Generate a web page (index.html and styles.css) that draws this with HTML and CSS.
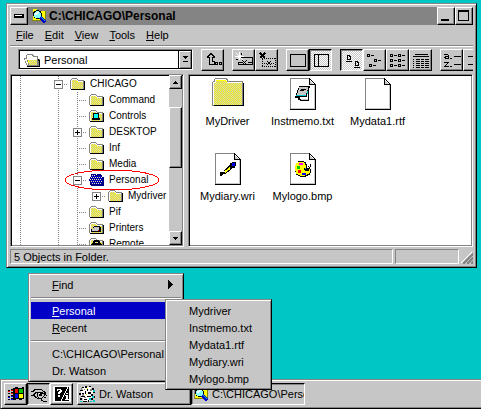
FILE: index.html
```html
<!DOCTYPE html>
<html lang="en">
<head>
<meta charset="utf-8">
<title>C:\CHICAGO\Personal</title>
<link rel="stylesheet" href="styles.css">
</head>
<body>
<svg class="defs" width="0" height="0" aria-hidden="true">
  <defs>
    <path id="checker" shape-rendering="auto" fill="none" stroke="#c6c6c6" stroke-dasharray="1 1" d="M0 .5h32M1 1.5h32M0 2.500h32M1 3.500h32M0 4.500h32M1 5.500h32M0 6.500h32M1 7.500h32M0 8.500h32M1 9.500h32M0 10.500h32M1 11.500h32M0 12.500h32M1 13.500h32M0 14.500h32M1 15.500h32M0 16.500h32M1 17.500h32M0 18.500h32M1 19.500h32M0 20.500h32M1 21.500h32"/>
    <symbol id="folder" viewBox="0 0 16 14">
      <path fill="#848484" d="M2 1h5v1h1v1h6v9h-14v-9h1v-1h1z"/>
      <path fill="#fff" d="M2 2h5v1h1v1h5v8h-12v-9h1z"/>
      <path fill="#ff0" d="M2 3h5v1h1v1h5v7h-11z"/>
      <svg x="2" y="3" width="5" height="2"><use href="#checker"/></svg>
      <svg x="2" y="5" width="11" height="7"><use href="#checker"/></svg>
      <path d="M14 4h1v9h-14v-1h13z"/>
    </symbol>
    <symbol id="magnifier" viewBox="0 0 16 16">
      <path fill="#848484" d="M1 0h6v2h8v11h-14z"/><path fill="#ff0" d="M2 1h4v2h8v9h-12z"/>
      <path fill="#848400" d="M1 12h13v1h-13zM14 3h1v10h-1z"/>
      <circle cx="6.500" cy="6.500" r="4" fill="#84ffff" stroke="#000"/>
      <path fill="#fff" d="M4 5h2v-1h2v1h-1v1h-1v1h-2z"/>
      <path d="M9.500 9.500l5 5" stroke="#0000c6" stroke-width="3"/><path d="M10 9l4 4" stroke="#00c6c6"/>
    </symbol>
    <symbol id="page" viewBox="0 0 32 32">
      <path fill="#848484" d="M3 0h20v1h-19v30h-1z"/><path fill="#fff" d="M4 1h18v6h6v24h-24z"/>
      <path d="M3 31h26v1h-26zM28 6h1v26h-1zM22 0h1v6h6v1h-7zM23 1h1v1h1v1h1v1h1v1h1v1h-1v-1h-1v-1h-1v-1h-1v-1h-1z"/>
      <path fill="#c6c6c6" d="M27 7h1v24h-24v-1h23zM23 3h1v1h1v1h1v1h-3z"/>
    </symbol>
  </defs>
</svg>

<main class="window">
  <header class="titlebar">
    <button class="bevel caption" aria-label="Control menu"><svg width="10" height="4"><path d="M0 0h10v4h-10z"/><path fill="#fff" d="M1 1h7v1h-7z"/></svg></button>
    <svg class="title-icon" width="16" height="16"><use href="#magnifier"/></svg>
    <h1>C:\CHICAGO\Personal</h1>
    <button class="bevel caption" aria-label="Minimize"><svg width="12" height="12"><path d="M1 9h8v2h-8z"/></svg></button>
    <button class="bevel caption" aria-label="Maximize"><svg width="12" height="12"><path fill-rule="evenodd" d="M0 0h11v11h-11zM1 2v8h9v-8z"/></svg></button>
  </header>

  <nav class="menubar">
    <a href="#"><u>F</u>ile</a><a href="#"><u>E</u>dit</a><a href="#"><u>V</u>iew</a><a href="#"><u>T</u>ools</a><a href="#"><u>H</u>elp</a>
  </nav>

  <div class="toolbar">
    <div class="combo">
      <svg width="18" height="14"><path fill="#848484" d="M2 2h1v-1h6v1h1v1h4v3h2v7h-13v-1h-1v-2h-1v-3h-1v-2h2z"/><path fill="#fff" d="M3 2h5v1h1v1h4v2h-10z"/><path fill="#ff0" d="M4 7h9v5h-8v-2h-1z"/><svg x="5" y="7" width="8" height="5"><use href="#checker"/></svg><path fill="#fff" d="M1 6h12v1h-10v2h1v3h-1v-2h-1v-2h-1z"/><path d="M14 6h1v1h1v7h-13v-1h12v-5h-1z"/></svg>
      <select aria-label="Folder"><option>Personal</option></select>
      <span class="drop"><svg width="7" height="7"><path d="M1 0h5v1h-1v1h-1v1h-1v-1h-1v-1h-1zM1 5h5v1h-5z"/></svg></span>
    </div>
    <div class="group">
      <button class="bevel tool" aria-label="Up one level"><svg width="20" height="18"><path fill="none" stroke="#000" d="M6.500 7v6.500h5v-3h-2v-4h2v-1h-1v-1h-1v-1h-1v-1h-1v1h-1v1h-1v1h-1v1h2"/><path fill-rule="evenodd" d="M12 11h3v3h-3zM13 12v1h1v-1zM16 11h3v3h-3zM17 12v1h1v-1z"/></svg></button>
    </div>
    <div class="group">
      <button class="bevel tool" aria-label="Connect drive"><svg width="20" height="18"><path fill="none" stroke="#000" d="M6.500 6.500h12v7h-14v-3M4 11.500h5M14 11.500h4M8 9l5 5M13 9l-5 5"/><path stroke="#fff" fill="none" d="M5.500 1v8M1 5.500h9M2 2l7 7M9 2l-7 7"/><path d="M7 2h1v2h-1zM2 8h2v1h-2zM9 6h2v1h-2z"/></svg></button>
      <button class="bevel tool" aria-label="Disconnect drive"><svg width="20" height="18"><path stroke="#000" stroke-width="2" d="M3 2l5 5M8 2l-5 5"/><path fill="none" stroke="#000" stroke-dasharray="1 1" d="M5 7.500h14M5 15.500h14M5.500 8v8M18.500 7v9M7 12.500h4M14 12.500h4"/><path stroke="#000" d="M10 10l4 4M14 10l-4 4"/></svg></button>
    </div>
    <div class="group">
      <button class="bevel tool" aria-label="Single pane"><svg width="20" height="18"><path fill="none" stroke="#000" d="M2.500 3.500h15v12h-15z"/></svg></button>
      <button class="bevel tool pressed" aria-label="Tree and contents"><svg width="20" height="18"><path fill="none" stroke="#000" d="M3.500 3.500h14v12h-14zM7.500 3v12"/></svg></button>
    </div>
    <div class="group">
      <button class="bevel tool pressed" aria-label="Large icons"><svg width="20" height="18"><path fill-rule="evenodd" d="M5 4h3v1h1v4h-4zM6 5v3h2v-2h-1v-1zM4 10h6v1h-6zM13 10h3v1h1v4h-4zM14 11v3h2v-2h-1v-1zM12 16h6v1h-6z"/></svg></button>
      <button class="bevel tool" aria-label="Small icons"><svg width="20" height="18"><path fill-rule="evenodd" d="M2 3h3v3h-3zM3 4v1h1v-1zM6 4h3v1h-3zM9 8h3v3h-3zM10 9v1h1v-1zM13 9h3v1h-3zM4 13h3v3h-3zM5 14v1h1v-1zM8 14h3v1h-3z"/></svg></button>
      <button class="bevel tool" aria-label="List"><svg width="20" height="18"><path fill-rule="evenodd" d="M2 3h3v3h-3zM3 4v1h1v-1zM6 4h3v1h-3zM2 8h3v3h-3zM3 9v1h1v-1zM6 9h3v1h-3zM2 13h3v3h-3zM3 14v1h1v-1zM6 14h3v1h-3zM10 3h3v3h-3zM11 4v1h1v-1zM14 4h3v1h-3zM10 8h3v3h-3zM11 9v1h1v-1zM14 9h3v1h-3zM10 13h3v3h-3zM11 14v1h1v-1zM14 14h3v1h-3z"/></svg></button>
      <button class="bevel tool" aria-label="Details"><svg width="20" height="18"><path d="M4 3h13v1h-13zM2 5h16v1h-16z"/><path fill="none" stroke="#000" d="M2 8.500h1M5 8.500h4M10 8.500h3M14 8.500h4M2 10.500h1M5 10.500h4M10 10.500h3M14 10.500h4M2 12.500h1M5 12.500h4M10 12.500h3M14 12.500h4M2 14.500h1M5 14.500h4M10 14.500h3M14 14.500h4M2 16.500h1M5 16.500h4M10 16.500h3M14 16.500h4"/></svg></button>
    </div>
    <div class="group">
      <button class="bevel tool" aria-label="Sort by name"><svg width="20" height="18"><path d="M2 3h4v1h1v4h-4v-1h-1v-1h1v-1h3v-1h-4zM8 7h2v1h-2zM12 5h7v1h-7zM2 11h5v1h-1v1h-1v1h-1v1h3v1h-5v-1h1v-1h1v-1h1v-1h-3zM8 15h2v1h-2zM12 13h7v1h-7z"/><path fill="#c6c6c6" d="M4 6h2v1h-2z"/></svg></button>
      <button class="bevel tool" aria-label="Sort by size"><svg width="20" height="18"><path d="M3 5h7v1h-7zM3 13h7v1h-7z"/></svg></button>
    </div>
  </div>

  <div class="panes">
    <section class="pane tree-pane">
      <ul class="tree">
        <li><i class="v"></i><i></i><i class="v h"></i><button class="exp" aria-label="Collapse"></button><svg width="16" height="14"><use href="#folder"/></svg>CHICAGO</li>
        <li><i class="v"></i><i></i><i class="v"></i><i class="v h"></i><svg width="16" height="14"><use href="#folder"/></svg>Command</li>
        <li><i class="v"></i><i></i><i class="v"></i><i class="v h"></i><svg width="16" height="14"><use href="#folder"/><path d="M4 4h6v5h1v2h-8v-2h1z"/><path fill="#0ff" d="M5 5h4v4h-4z"/></svg>Controls</li>
        <li><i class="v"></i><i></i><i class="v"></i><i class="v h"></i><button class="exp plus" aria-label="Expand"></button><svg width="16" height="14"><use href="#folder"/></svg>DESKTOP</li>
        <li><i class="v"></i><i></i><i class="v"></i><i class="v h"></i><svg width="16" height="14"><use href="#folder"/></svg>Inf</li>
        <li><i class="v"></i><i></i><i class="v"></i><i class="v h"></i><svg width="16" height="14"><use href="#folder"/></svg>Media</li>
        <li class="circled"><i class="v"></i><i></i><i class="v"></i><i class="v h"></i><button class="exp" aria-label="Collapse"></button><svg width="16" height="14"><path fill="#000084" d="M2 1h5v1h1v-1h4v1h1v2h2v9h-13v-1h-1v-4h-1v-2h1v-2h1z"/><path fill="none" stroke="#e7e7c6" stroke-dasharray="1 1" d="M3 2.500h4M2 4.500h11M1 6.500h12M2 8.500h11M3 10.500h10"/><path fill="none" stroke="#0000ff" stroke-dasharray="1 1" d="M3 3.500h9M3 5.500h10M2 7.500h11M3 9.500h10"/></svg>Personal
          <svg class="ring" viewBox="0 0 96 22"><ellipse cx="48" cy="11" rx="47" ry="10" fill="none" stroke="red"/></svg></li>
        <li><i class="v"></i><i></i><i class="v"></i><i class="v"></i><i class="h"></i><button class="exp plus" aria-label="Expand"></button><svg width="16" height="14"><use href="#folder"/></svg>Mydriver</li>
        <li><i class="v"></i><i></i><i class="v"></i><i class="v h"></i><svg width="16" height="14"><use href="#folder"/></svg>Pif</li>
        <li><i class="v"></i><i></i><i class="v"></i><i class="v h"></i><svg width="16" height="14"><use href="#folder"/><path d="M5 5h6v1h1v5h-10v-3h2v-2h1z"/><path fill="#c6c6c6" d="M5 6h5v2h-6v-1h1zM3 8h7v2h-7z"/><path fill="red" d="M9 9h1v1h-1z"/></svg>Printers</li>
        <li><i class="v"></i><i></i><i class="v"></i><i class="v h"></i><svg width="16" height="14"><use href="#folder"/><path fill="none" stroke="#000" stroke-width="2" d="M3 8l3-4h3l3 4M4 11v-2l2-2h3l2 2v2"/></svg>Remote</li>
      </ul>
      <div class="scrollbar">
        <button class="bevel arrow" aria-label="Scroll up"><svg width="5" height="3"><path d="M2 0h1v1h1v1h1v1h-5v-1h1v-1h1z"/></svg></button>
        <div class="bevel thumb"></div>
        <button class="bevel arrow" aria-label="Scroll down"><svg width="5" height="3"><path d="M0 0h5v1h-1v1h-1v1h-1v-1h-1v-1h-1z"/></svg></button>
      </div>
    </section>

    <section class="pane files">
      <figure><svg width="32" height="32"><path fill="#848484" d="M1 3h1v-2h1v-1h12v1h1v2h15v25h-31v-24h1z"/><path fill="#fff" d="M3 1h11v1h1v2h15v23h-29v-23h2z"/><path fill="#ff0" d="M4 2h10v1h1v2h15v22h-28v-22h2z"/><svg x="4" y="3" width="10" height="2"><use href="#checker"/></svg><svg x="2" y="5" width="28" height="22"><use href="#checker"/></svg><path d="M31 5h1v23h-30v-1h29z"/></svg><figcaption>MyDriver</figcaption></figure>
      <figure><svg width="32" height="32"><use href="#page"/><path d="M12 8h11v2h-1v13h-9v-1h-2v-2h-3v-2h1v-3h1v-3h1v-2h1z"/><path fill="#c6c6c6" d="M12 9h9v3h-1v3h-1v2h-9v-2h1v-3h1z"/><path fill="#fff" d="M20 16h1v5h-8v-2h7z"/><path fill="#c6c6c6" d="M14 21h7v1h-7z"/><path fill="#00c6c6" d="M9 17h10v1h-10zM20 13h1v3h-1z"/><path d="M14 11h5v1h-5zM13 12h4v1h-4z"/></svg><figcaption>Instmemo.txt</figcaption></figure>
      <figure><svg width="32" height="32"><use href="#page"/></svg><figcaption>Mydata1.rtf</figcaption></figure>
      <figure><svg width="32" height="32"><use href="#page"/><path d="M8 19h5v-1h2v2h-1v1h-3v1h-1v1h-2z"/><path stroke="#000" stroke-width="4" d="M13 19l7-6"/><path stroke="#ff0" stroke-width="2" d="M13 19l5-4"/><path d="M18 10h2v-1h4v4h-1v2h-3v-1h-1v-1h-1z"/><path fill="#00f" d="M20 10h3v3h-3z"/></svg><figcaption>Mydiary.wri</figcaption></figure>
      <figure><svg width="32" height="32"><use href="#page"/><path d="M11 8h6v1h2v2h1v4h3v1h1v4h-1v2h-2v1h-2v1h-6v-1h-2v-1h-2v-3h-1v-7h1v-2h2z"/><path fill="#ff0" d="M11 9h6v1h1v2h1v4h4v4h-1v1h-2v1h-2v1h-5v-1h-2v-1h-2v-3h-1v-6h1v-2h1z"/><path fill="#f0f" d="M12 10h4v2h-4z"/><path fill="#00c600" d="M10 13h3v3h-3z"/><path fill="red" d="M11 17h3v3h-3z"/><path fill="#00f" d="M15 20h4v2h-4z"/><path d="M17 15h5v3h-4v-1h-1zM21 13h1v1h-1zM22 14h1v-3h1v3h-1v1h-1z"/><path fill="#00c6c6" d="M18 15h1v1h-1z"/></svg><figcaption>Mylogo.bmp</figcaption></figure>
    </section>
  </div>

  <footer class="status">
    <span class="field wide">5 Objects in Folder.</span>
    <span class="field"></span>
    <svg width="12" height="12"><path stroke="#fff" d="M0 11l11-11M4 11l8-8M8 11l4-4"/><path stroke="#848484" stroke-width="2" d="M2 12l10-10M6 12l6-6M10 12l2-2"/></svg>
  </footer>
</main>

<footer class="taskbar">
  <button class="bevel task-icon" aria-label="Start"><svg width="18" height="16"><path d="M7 2h1v-1h3v1h4v-1h2v12h-2v1h-3v-1h-3v1h-3v-12zM4 3h2v2h-2zM4 6h2v2h-2zM4 9h2v2h-2zM4 12h2v2h-2zM1 4h2v1h-2zM1 7h2v1h-2zM1 10h2v1h-2zM1 13h2v1h-2z"/><path fill="red" d="M8 3h3v4h-3zM4 4h2v1h-2zM4 7h2v1h-2zM1 5h2v1h-2z"/><path fill="#00c600" d="M12 3h4v4h-4z"/><path fill="#00f" d="M8 8h3v4h-3zM4 10h2v1h-2zM4 13h2v1h-2zM1 11h2v1h-2z"/><path fill="#ff0" d="M12 8h4v4h-4z"/></svg></button>
  <button class="bevel task-icon pressed" aria-label="Find"><svg width="18" height="16"><path fill="none" stroke="#000" d="M1 5.500h2l2-2h6l3 2 2 2M1 9.500h2l3-3h5l3 1 3 2M3 9l4 3h3M7 7v3l2 2h3l2-2v-2M11 12v2l2 1h4M14 11l2 1"/><path d="M9 7h3v3h-3z"/><path fill="#fff" d="M9 7h1v1h-1z"/></svg></button>
  <button class="bevel task-icon" aria-label="Help"><svg width="18" height="16"><path fill="#fff" d="M0 0h18v16h-18z"/><path d="M2 1h14v14h-14z"/><path fill="#fff" d="M14 1h1v2h-1v2h-1v2h-1v2h-1v2h-1v2h-1v2h-1v-2h1v-2h1v-2h1v-2h1v-2h1v-2h1zM4 3h4v1h1v2h-1v1h-1v1h-2v-2h1v-1h1v-1h-2v1h-1zM5 9h2v2h-2zM13 7h2v1h-2zM12 9h3v4h1v1h-4v-1h1v-3h-1z"/></svg></button>
  <button class="bevel task"><svg width="17" height="17"><path fill="#fff" d="M4 1h8v2h2v10h-3v2h-7v-3h-2v-8h2z"/><path d="M3 1h2v1h-2zM6 0h2v2h-2zM10 0h2v1h-2zM13 2h2v2h-2zM1 4h3v1h-3zM0 7h2v2h-2zM3 7h2v1h-2zM2 10h4v1h-4zM1 12h2v2h-2zM5 13h3v1h-3zM4 15h4v1h-4zM8 3h1v2h-1zM6 5h1v3h-1zM9 6h3v2h-3zM14 6h2v1h-2zM12 8h2v2h-2zM8 10h4v1h-4zM12 12h2v2h-2zM9 14h1v2h-1zM15 10h1v2h-1z"/><path fill="#848484" d="M2 2h1v2h-1zM5 3h1v1h-1zM3 8h2v2h-2zM11 3h2v2h-2zM5 11h2v1h-2z"/><path fill="#0cc" d="M14 4h2v2h-2zM13 10h2v2h-2zM10 12h2v2h-2zM14 14h2v2h-2zM11 15h2v1h-2zM1 15h2v1h-2z"/><path fill="#ff0" d="M8 2h1v1h-1zM7 8h1v1h-1z"/></svg>Dr. Watson</button>
  <button class="bevel task pressed"><svg width="16" height="16"><use href="#magnifier"/></svg>C:\CHICAGO\Personal</button>

  <div class="popup main-menu" role="menu">
    <a href="#" role="menuitem"><u>F</u>ind<svg width="6" height="9"><path d="M0 0h1v1h1v1h1v1h1v1h1v1h-1v1h-1v1h-1v1h-1v1h-1z"/></svg></a>
    <hr>
    <div class="parent">
      <a href="#" role="menuitem" class="active"><u>P</u>ersonal</a>
      <div class="popup submenu" role="menu">
        <a href="#" role="menuitem">Mydriver</a>
        <a href="#" role="menuitem">Instmemo.txt</a>
        <a href="#" role="menuitem">Mydata1.rtf</a>
        <a href="#" role="menuitem">Mydiary.wri</a>
        <a href="#" role="menuitem">Mylogo.bmp</a>
      </div>
    </div>
    <a href="#" role="menuitem"><u>R</u>ecent</a>
    <hr>
    <a href="#" role="menuitem">C:\CHICAGO\Personal</a>
    <a href="#" role="menuitem">Dr. Watson</a>
  </div>
</footer>
</body>
</html>
```
FILE: styles.css
```css
:root {
  --face: #c6c6c6;
  --shade: #848484;
  --desk: #00c6c6;
}
* { box-sizing: border-box; }
body {
  margin: 0;
  height: 100vh;
  display: flex;
  flex-direction: column;
  background: var(--desk);
  color: #000;
  font: 11px/16px "Liberation Sans", Arial, sans-serif;
  overflow: hidden;
}
svg { flex: none; display: block; shape-rendering: crispEdges; }
.defs { position: absolute; }
button, select { font: inherit; color: inherit; padding: 0; margin: 0; border-radius: 0; }
a { color: inherit; text-decoration: none; }
u { text-underline-offset: 1px; }

.bevel {
  display: flex;
  align-items: center;
  justify-content: center;
  background: var(--face);
  border: 1px solid;
  border-color: #fff #000 #000 #fff;
  box-shadow: inset -1px -1px var(--shade);
}
.pressed {
  border-color: #000 #fff #fff #000;
  box-shadow: inset 1px 1px var(--shade);
}
.tool.pressed { background: conic-gradient(#fff 25%, var(--face) 0 50%, #fff 0 75%, var(--face) 0) 0 0 / 2px 2px; }

.window {
  flex: 1;
  min-height: 0;
  margin: 3px 4px 111px 6px;
  padding: 3px;
  display: flex;
  flex-direction: column;
  background: var(--face);
  border: 1px solid;
  border-color: var(--shade) #000 #000 var(--shade);
  box-shadow: inset 1px 1px #fff, inset -1px -1px var(--shade);
}
.titlebar { display: flex; height: 18px; background: var(--shade); }
.caption { width: 18px; height: 18px; }
.title-icon { margin: 1px 2px 0 3px; }
h1 { flex: 1; margin: 0; font-weight: bold; font-size: 12px; line-height: 18px; }

.menubar { display: flex; gap: 11px; height: 20px; padding: 0 6px; line-height: 20px; }

.toolbar {
  display: flex;
  gap: 8px;
  height: 29px;
  padding: 3px 0 3px 8px;
  border-top: 1px solid var(--shade);
  box-shadow: inset 0 1px #fff;
  overflow: hidden;
}
.group { display: flex; flex: none; }
.tool { width: 23px; height: 22px; }
.combo {
  flex: none;
  width: 175px;
  height: 21px;
  display: flex;
  align-items: center;
  background: #fff;
  border: 1px solid;
  border-color: var(--shade) #fff #fff var(--shade);
  box-shadow: inset 1px 1px #000, inset -1px -1px #000;
  padding: 1px 1px 1px 5px;
}
.combo select { flex: 1; min-width: 0; appearance: none; border: 0; background: none; padding-left: 2px; }
.drop {
  width: 13px;
  height: 17px;
  display: flex;
  align-items: center;
  justify-content: center;
  background: var(--face);
  border-left: 1px solid #000;
  box-shadow: inset 1px 1px #fff, inset -1px -1px var(--shade);
}

.panes { flex: 1; min-height: 0; display: flex; gap: 4px; }
.pane {
  background: #fff;
  border: 1px solid;
  border-color: var(--shade) #fff #fff var(--shade);
  box-shadow: inset 1px 1px #000, inset -1px -1px var(--shade);
  overflow: hidden;
}
.tree-pane { flex: none; width: 174px; display: flex; padding: 1px; }
.tree { flex: 1; margin: 0 0 0 -1px; padding: 0; list-style: none; overflow: hidden; font-size: 10px; }
.tree li { display: flex; align-items: center; height: 16px; white-space: nowrap; }
.tree i { flex: none; width: 19px; height: 16px; background-repeat: no-repeat; }
.tree .v { background-image: repeating-linear-gradient(var(--shade) 0 1px, #fff 1px 2px); background-size: 1px 16px; background-position: 9px 0; }
.tree .h { background-image: repeating-linear-gradient(90deg, var(--shade) 0 1px, #fff 1px 2px); background-size: 10px 1px; background-position: 9px 8px; }
.tree .v.h {
  background-image: repeating-linear-gradient(var(--shade) 0 1px, #fff 1px 2px), repeating-linear-gradient(90deg, var(--shade) 0 1px, #fff 1px 2px);
  background-size: 1px 16px, 10px 1px;
  background-position: 9px 0, 9px 8px;
}
.tree li > svg:not(.ring) { margin: 0 4px 0 2px; }
.exp {
  flex: none;
  width: 9px;
  height: 9px;
  margin: 0 5px 0 -14px;
  border: 1px solid var(--shade);
  background: linear-gradient(#000, #000) center / 5px 1px no-repeat, #fff;
}
.plus { background: linear-gradient(#000, #000) center / 5px 1px no-repeat, linear-gradient(#000, #000) center / 1px 5px no-repeat, #fff; }
.tree .circled { position: relative; }
.ring { position: absolute; left: 53px; top: -3px; width: 96px; height: 22px; }
.scrollbar { flex: none; width: 13px; margin-top: -1px; display: flex; flex-direction: column; background: var(--face); }
.arrow { height: 14px; }
.thumb { height: 61px; margin: 18px 0 auto; }

.files {
  flex: 1;
  padding: 1px;
  display: grid;
  grid-template-columns: repeat(auto-fill, 75px);
  grid-auto-rows: 75px;
}
.files figure { margin: 0; padding-top: 2px; display: flex; flex-direction: column; align-items: center; gap: 3px; }

.status { flex: none; display: flex; gap: 2px; height: 17px; padding-top: 2px; align-items: stretch; }
.field { width: 64px; padding-left: 3px; line-height: 14px; border: 1px solid; border-color: var(--shade) #fff #fff var(--shade); }
.wide { flex: 1; }
.status svg { align-self: flex-end; }

.taskbar {
  position: relative;
  flex: none;
  display: flex;
  height: 30px;
  padding: 3px;
  background: var(--face);
  border: 1px solid;
  border-color: var(--shade) var(--face) #000 var(--shade);
  border-right: 0;
  box-shadow: inset 1px 1px #fff, inset 0 -1px var(--shade);
}
.task-icon { width: 23px; height: 22px; }
.task { width: 114px; height: 22px; justify-content: flex-start; gap: 3px; padding-left: 1px; overflow: hidden; white-space: nowrap; }
.task-icon + .task { margin-left: 4px; }

.popup {
  position: absolute;
  padding: 2px;
  background: var(--face);
  border: 1px solid;
  border-color: var(--shade) #000 #000 var(--shade);
  box-shadow: inset 1px 1px #fff, inset -1px -1px var(--shade);
}
.popup a { display: flex; align-items: center; height: 17px; padding-left: 21px; white-space: pre; }
.popup a svg { margin: 0 7px 0 auto; }
.popup hr { height: 2px; margin: 4px 0 3px; border: 0; border-top: 1px solid var(--shade); border-bottom: 1px solid #fff; }
.popup .active { background: #0000c6; color: #fff; }
.main-menu { left: 27px; bottom: 26px; width: 156px; }
.parent { position: relative; }
.submenu { left: 134px; top: -3px; width: 107px; z-index: 1; color: #000; }
```
